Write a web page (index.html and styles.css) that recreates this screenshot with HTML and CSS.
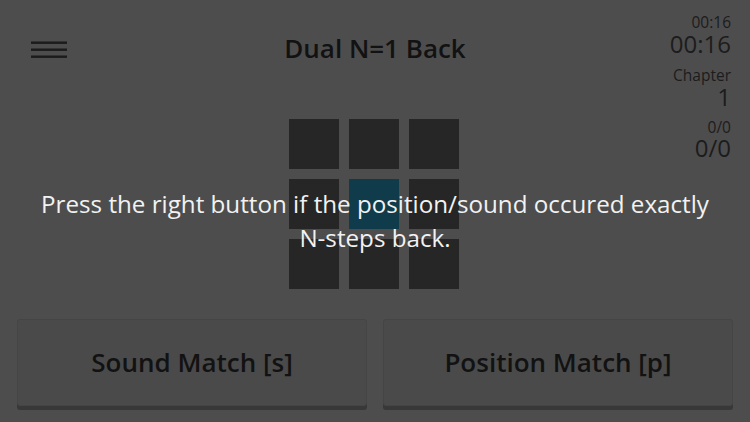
FILE: index.html
```html
<!DOCTYPE html>
<html>
<head>
<meta charset="utf-8">
<link rel="stylesheet" href="styles.css">
</head>
<body>
<div class="app">
  <div class="top">
    <div class="left">
      <svg class="menu" width="36" height="17" viewBox="0 0 36 17">
        <rect x="0" y="0.5" width="36" height="2.4" fill="#1b1b1b"/>
        <rect x="0" y="7.5" width="36" height="2.4" fill="#1b1b1b"/>
        <rect x="0" y="14.5" width="36" height="2.4" fill="#1b1b1b"/>
      </svg>
    </div>
    <div class="center">
      <div class="title">Dual N=1 Back</div>
      <div class="board">
        <div class="cell"></div><div class="cell"></div><div class="cell"></div>
        <div class="cell"></div><div class="cell active"></div><div class="cell"></div>
        <div class="cell"></div><div class="cell"></div><div class="cell"></div>
      </div>
    </div>
    <div class="stats">
      <div class="s-small t0">00:16</div>
      <div class="s-big t1">00:16</div>
      <div class="s-mid t2">Chapter</div>
      <div class="s-big t3">1</div>
      <div class="s-small t4">0/0</div>
      <div class="s-big t5">0/0</div>
    </div>
  </div>
  <div class="hint">Press the right button if the position/sound occured exactly<br>N-steps back.</div>
  <div class="buttons">
    <div class="btn">Sound Match [s]</div>
    <div class="btn">Position Match [p]</div>
  </div>
</div>
</body>
</html>
```

FILE: styles.css
```css
html, body {
  margin: 0;
  padding: 0;
}
body {
  width: 750px;
  height: 422px;
  overflow: hidden;
  background: #4d4d4d;
  font-family: "Open Sans", "Noto Sans", sans-serif;
}
.app {
  position: relative;
  height: 422px;
  display: flex;
  flex-direction: column;
}
.top {
  display: grid;
  grid-template-columns: 1fr auto 1fr;
  height: 319px;
}
.left {
  padding: 41px 0 0 31px;
}
.menu {
  display: block;
}
.center {
  display: flex;
  flex-direction: column;
  align-items: center;
  padding-top: 30px;
}
.title {
  font-size: 26px;
  line-height: 36px;
  font-weight: 600;
  color: #121212;
}
.board {
  margin-top: 53px;
  display: grid;
  grid-template-columns: repeat(3, 50px);
  grid-auto-rows: 50px;
  gap: 10px;
  margin-left: -2px;
}
.cell {
  background: #262626;
}
.cell.active {
  background: #0f3b4b;
}
.stats {
  display: flex;
  flex-direction: column;
  align-items: flex-end;
  padding: 14px 19px 0 0;
  color: #1c1c1c;
}
.s-small { font-size: 15.5px; line-height: 16px; }
.s-mid { font-size: 15.5px; line-height: 20px; }
.s-big { font-size: 24px; line-height: 24px; }
.t1 { line-height: 28px; }
.t2 { margin-top: 7.3px; }
.t4 { margin-top: 9.5px; }
.t5 { margin-top: 1.5px; }
.hint {
  position: absolute;
  left: 0;
  right: 0;
  top: 187px;
  text-align: center;
  color: #f2f2f2;
  font-size: 24.2px;
  line-height: 34px;
}
.buttons {
  display: flex;
  gap: 16px;
  padding: 0 17px;
}
.btn {
  flex: 1;
  height: 87px;
  display: flex;
  align-items: center;
  justify-content: center;
  background: #4a4a4a;
  border: 1px solid #454545;
  border-radius: 3px;
  box-shadow: 0 4px 0 #383838;
  font-size: 26px;
  font-weight: 600;
  color: #121212;
  padding-bottom: 2px;
  box-sizing: border-box;
}
```
